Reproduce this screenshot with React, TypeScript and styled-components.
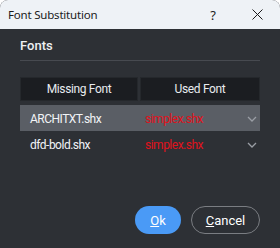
import styled, { createGlobalStyle } from 'styled-components';

const GlobalStyle = createGlobalStyle`
  html, body {
    margin: 0;
    padding: 0;
    background: #ffffff;
  }
`;

const rows = [
  { missing: 'ARCHITXT.shx', used: 'simplex.shx', selected: true },
  { missing: 'dfd-bold.shx', used: 'simplex.shx', selected: false },
];

const Chevron = () => (
  <svg width="10" height="6" viewBox="0 0 10 6">
    <polyline points="1,1 5,5 9,1" fill="none" stroke="#9a9ea5" strokeWidth="1.3" />
  </svg>
);

const CloseIcon = () => (
  <svg width="11" height="11" viewBox="0 0 11 11">
    <path d="M0.5 0.5 L10.5 10.5 M10.5 0.5 L0.5 10.5" stroke="#1b1b1b" strokeWidth="1" />
  </svg>
);

export default function App() {
  return (
    <>
      <GlobalStyle />
      <Window>
        <TitleBar>
          <Title>Font Substitution</Title>
          <Help>?</Help>
          <Close>
            <CloseIcon />
          </Close>
        </TitleBar>
        <Body>
          <Section>Fonts</Section>
          <Table>
            <HeaderRow>
              <HeaderCell>Missing Font</HeaderCell>
              <HeaderCell>Used Font</HeaderCell>
            </HeaderRow>
            {rows.map((r) => (
              <Row key={r.missing} selected={r.selected}>
                <Missing>{r.missing}</Missing>
                <Used>{r.used}</Used>
                <Chevron />
              </Row>
            ))}
          </Table>
          <Footer>
            <PrimaryButton>
              <u>O</u>k
            </PrimaryButton>
            <OutlineButton>
              <u>C</u>ancel
            </OutlineButton>
          </Footer>
        </Body>
      </Window>
    </>
  );
}

const Window = styled.div`
  width: 280px;
  height: 248px;
  display: flex;
  flex-direction: column;
  border-radius: 8px 8px 0 0;
  overflow: hidden;
  background: #2d3035;
`;

const TitleBar = styled.div`
  height: 29px;
  flex-shrink: 0;
  background: #eef2f6;
  display: flex;
  align-items: center;
  padding-left: 8px;
  font-family: 'Noto Sans', sans-serif;
  font-size: 11.5px;
  letter-spacing: -0.2px;
  color: #1b1b1b;
`;

const Title = styled.div`
  flex: 1;
`;

const Help = styled.div`
  width: 14px;
  margin-right: 32px;
  font-size: 13px;
  text-align: center;
`;

const Close = styled.div`
  width: 11px;
  margin-right: 17px;
  display: flex;
  align-items: center;
`;

const Body = styled.div`
  flex: 1;
  display: flex;
  flex-direction: column;
  padding: 0 20px;
  font-family: Roboto, 'Noto Sans', sans-serif;
  font-size: 12px;
  color: #eef0f3;
`;

const Section = styled.div`
  height: 30px;
  display: flex;
  align-items: center;
  padding-top: 1px;
  font-size: 13px;
  font-weight: 500;
  border-bottom: 1px solid #474a50;
`;

const Table = styled.div`
  margin-top: 16px;
  display: flex;
  flex-direction: column;
`;

const HeaderRow = styled.div`
  display: grid;
  grid-template-columns: 118px 1fr;
  gap: 2px;
  margin-bottom: 4px;
`;

const HeaderCell = styled.div`
  height: 24px;
  box-sizing: border-box;
  display: flex;
  align-items: center;
  justify-content: center;
  background: #1b1d21;
  border: 1px solid #25282c;
  color: #e8ebef;
  letter-spacing: -0.35px;
`;

const Row = styled.div<{ selected: boolean }>`
  height: 26px;
  display: grid;
  grid-template-columns: 115px 1fr 10px;
  align-items: center;
  padding: 2px 3px 0 10px;
  box-sizing: border-box;
  background: ${(p) => (p.selected ? '#5a5e65' : 'transparent')};
  letter-spacing: -0.5px;
`;

const Missing = styled.div`
  color: #f2f4f7;
`;

const Used = styled.div`
  color: #e0121c;
`;

const Footer = styled.div`
  margin-top: auto;
  margin-bottom: 14px;
  display: flex;
  justify-content: flex-end;
  gap: 10px;
`;

const ButtonBase = styled.div`
  height: 28px;
  box-sizing: border-box;
  border-radius: 14px;
  display: flex;
  align-items: center;
  justify-content: center;
  font-size: 13px;
  color: #ffffff;
`;

const PrimaryButton = styled(ButtonBase)`
  width: 46px;
  background: #4a9af6;
`;

const OutlineButton = styled(ButtonBase)`
  width: 69px;
  border: 1px solid #7a7d82;
`;
